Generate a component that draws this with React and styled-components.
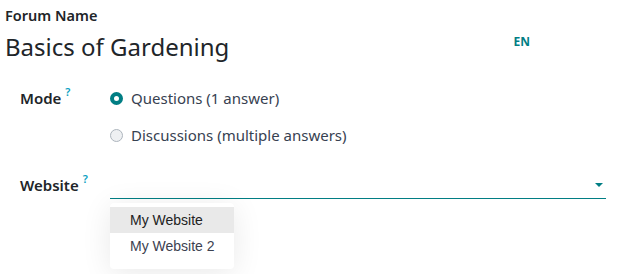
import React from 'react';
import styled, { createGlobalStyle } from 'styled-components';

const GlobalStyle = createGlobalStyle`
  html, body {
    margin: 0;
    padding: 0;
    background: #fff;
  }
  body {
    font-family: 'Noto Sans', 'Open Sans', sans-serif;
    color: #212529;
  }
`;

const Sheet = styled.div`
  width: 618px;
  height: 274px;
  padding: 6px 12px 0 5px;
  box-sizing: border-box;
  position: relative;
`;

const TitleBlock = styled.div`
  display: flex;
  justify-content: space-between;
  align-items: flex-start;
`;

const TitleText = styled.div`
  display: flex;
  flex-direction: column;
`;

const SmallLabel = styled.div`
  font-weight: 600;
  font-size: 14.5px;
  line-height: 18px;
`;

const BigTitle = styled.div`
  font-size: 24px;
  line-height: 34px;
  margin-top: 6px;
`;

const Lang = styled.span`
  color: #017e84;
  font-weight: 700;
  font-size: 12px;
  margin: 27px 76px 0 0;
`;

const Grid = styled.div`
  display: grid;
  grid-template-columns: 90px 1fr;
  margin-top: 22px;
  padding-left: 15px;
  row-gap: 22px;
`;

const FieldLabel = styled.div`
  font-weight: 600;
  font-size: 15px;
  line-height: 24px;
  display: flex;
  align-items: flex-start;
  margin-top: ${(p) => p.$offset || 0}px;
`;

const Help = styled.sup`
  color: #0a9fc2;
  font-size: 11px;
  font-weight: 600;
  margin-left: 4px;
  line-height: 12px;
  vertical-align: top;
`;

const Radios = styled.div`
  display: flex;
  flex-direction: column;
  gap: 13px;
`;

const RadioRow = styled.label`
  display: flex;
  align-items: center;
  gap: 8px;
  font-size: 15px;
  line-height: 24px;
  color: #374151;
`;

const RadioDot = styled.span`
  width: 13px;
  height: 13px;
  border-radius: 50%;
  box-sizing: border-box;
  flex: none;
  border: ${(p) => (p.checked ? '4px solid #017e84' : '1px solid #adb5bd')};
  background: ${(p) => (p.checked ? '#fff' : '#eef0f2')};
`;

const SelectWrap = styled.div`
  position: relative;
  margin-top: 3px;
`;

const SelectLine = styled.div`
  height: 26px;
  border-bottom: 1.5px solid #017e84;
  display: flex;
  justify-content: flex-end;
  align-items: center;
  padding-right: 3px;
`;

const Caret = styled.span`
  width: 0;
  height: 0;
  border-left: 4px solid transparent;
  border-right: 4px solid transparent;
  border-top: 4px solid #017e84;
`;

const Menu = styled.ul`
  position: absolute;
  top: 31px;
  left: 0;
  width: 124px;
  margin: 0;
  padding: 4px 0 10px;
  list-style: none;
  background: #fff;
  border-radius: 4px;
  box-shadow: 0 4px 30px rgba(0, 0, 0, 0.09);
`;

const MenuItem = styled.li`
  font-family: 'Liberation Sans', Arial, sans-serif;
  font-size: 14px;
  line-height: 26px;
  padding-left: 20px;
  color: ${(p) => (p.active ? '#222' : '#3c4150')};
  background: ${(p) => (p.active ? '#e9e9e9' : 'transparent')};
`;

export default function App() {
  return (
    <Sheet>
      <GlobalStyle />
      <TitleBlock>
        <TitleText>
          <SmallLabel>Forum Name</SmallLabel>
          <BigTitle>Basics of Gardening</BigTitle>
        </TitleText>
        <Lang>EN</Lang>
      </TitleBlock>
      <Grid>
        <FieldLabel>
          Mode<Help>?</Help>
        </FieldLabel>
        <Radios>
          <RadioRow>
            <RadioDot checked />
            Questions (1 answer)
          </RadioRow>
          <RadioRow>
            <RadioDot />
            Discussions (multiple answers)
          </RadioRow>
        </Radios>
        <FieldLabel $offset={4}>
          Website<Help>?</Help>
        </FieldLabel>
        <SelectWrap>
          <SelectLine>
            <Caret />
          </SelectLine>
          <Menu>
            <MenuItem active>My Website</MenuItem>
            <MenuItem>My Website 2</MenuItem>
          </Menu>
        </SelectWrap>
      </Grid>
    </Sheet>
  );
}
